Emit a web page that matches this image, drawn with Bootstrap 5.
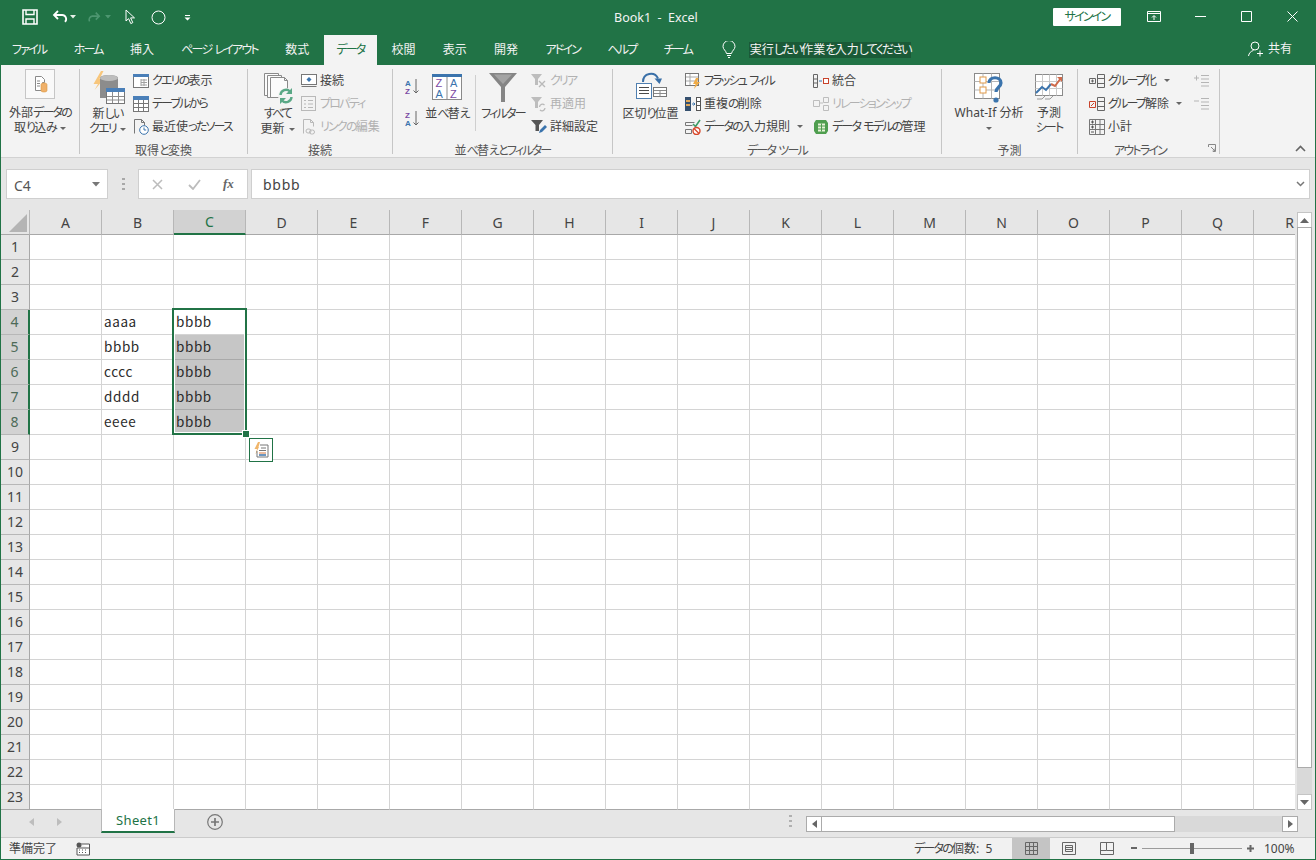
<!DOCTYPE html>
<html lang="ja">
<head>
<meta charset="UTF-8">
<title>Book1 - Excel</title>
<link rel="stylesheet" href="https://cdn.jsdelivr.net/npm/bootstrap@5.3.0/dist/css/bootstrap.min.css">
<style>
html, body { margin: 0; width: 1316px; height: 860px; overflow: hidden; background: #fff; }
body, button { font-family: "Noto Sans", "Noto Sans CJK JP", sans-serif; font-size: 12px; font-feature-settings: "palt"; color: #444; }
svg { display: block; flex: none; }
.xl-kana { letter-spacing: -1.8px; }
.xl-app { width: 1316px; height: 860px; border-left: 1px solid #217346; border-right: 1px solid #217346; border-bottom: 1px solid #217346; }

/* spacing helpers */
.xl-l2 { margin-left: 2px; }
.xl-l4 { margin-left: 4px; }
.xl-l5 { margin-left: 5px; }
.xl-l6 { margin-left: 6px; }
.xl-l7 { margin-left: 7px; }
.xl-l8 { margin-left: 8px; }
.xl-l9 { margin-left: 9px; }
.xl-l11 { margin-left: 11px; }
.xl-l13 { margin-left: 13px; }
.xl-l14 { margin-left: 14px; }
.xl-l15 { margin-left: 15px; }
.xl-l18 { margin-left: 18px; }
.xl-l25 { margin-left: 25px; }
.xl-t4 { margin-top: 4px; }
.xl-t5 { margin-top: 5px; }

/* title and tabs */
.xl-title { height: 33px; background: #217346; color: #fff; margin-left: -1px; margin-right: -1px; }
.xl-qat { padding-left: 22px; height: 33px; }
.xl-qat svg { margin-top: 1px; }
.xl-doc { position: absolute; left: 614px; top: 9px; font-size: 12.5px; color: #f3f3f3; white-space: pre; }
.xl-signin.btn { position: absolute; left: 1053px; top: 8px; width: 68px; height: 18px; padding: 0; border: 0; border-radius: 1px; background: #fff; color: #217346; font-size: 12px; line-height: 18px; }
.xl-winbtn { position: absolute; top: 0; }
.xl-win1 { left: 1147px; }
.xl-win2 { left: 1195px; }
.xl-win3 { left: 1241px; }
.xl-win4 { left: 1287px; }
.xl-tabs { height: 32px; background: #217346; margin-left: -1px; margin-right: -1px; padding-left: 12px; color: #f2f2f2; }
.xl-tab { margin-right: 27.3px; text-align: left; line-height: 16px; padding-top: 9px; white-space: nowrap; }
.xl-tab-on { width: 53px; background: #f3f3f3; color: #217346; margin: 2px 14px 0 -12px; padding: 7px 0 0 12px; }
.xl-bulb { margin: 8px 0 0 3px; }
.xl-search { margin: 9px 0 0 13px; height: 16px; width: 162px; background: #1a5a37; color: #f4f4f4; line-height: 16px; text-align: center; white-space: nowrap; }
.xl-share { position: absolute; left: 1248px; top: 7px; color: #f4f4f4; gap: 5px; }

/* ribbon */
.xl-ribbon { height: 93px; background: #f3f3f3; border-bottom: 1px solid #d2d2d2; padding-top: 4px; }
.xl-group { height: 85px; border-right: 1px solid #c6c6c6; position: relative; flex: none; }
.xl-gbody { height: 74px; }
.xl-glabel { height: 15px; line-height: 15px; text-align: center; color: #555; white-space: nowrap; }
.xl-glabel-out { padding-right: 17px; }
.xl-g1 { width: 79px; }
.xl-g2 { width: 168px; }
.xl-g3 { width: 145px; }
.xl-g4 { width: 220px; }
.xl-g5 { width: 329px; }
.xl-g6 { width: 136px; }
.xl-g7 { width: 142px; }
.xl-g2 .xl-gbody { padding-left: 7px; }
.xl-g3 .xl-gbody { padding-left: 12px; }
.xl-g4 .xl-gbody { padding-left: 12px; }
.xl-g5 .xl-gbody { padding-left: 10px; }
.xl-g6 .xl-gbody { padding-left: 10px; }
.xl-g7 .xl-gbody { padding-left: 11px; }
.xl-big { display: flex; flex-direction: column; align-items: center; line-height: 15px; text-align: center; white-space: nowrap; flex: none; }
.xl-icon36 { height: 36px; }
.xl-icon37 { height: 37px; }
.xl-small { flex: none; }
.xl-item { height: 23px; gap: 3px; white-space: nowrap; }
.xl-off { color: #b1b1b1; }
.xl-caret { display: inline-block; width: 0; height: 0; border: 3px solid transparent; border-top: 3px solid #666; border-bottom: 0; vertical-align: middle; margin-left: 4px; }
.xl-w15 { width: 15px; }
.xl-w30 { width: 30px; }
.xl-w35 { width: 35px; }
.xl-w41 { width: 41px; }
.xl-w44 { width: 44px; }
.xl-w55 { width: 55px; }
.xl-w74 { width: 74px; }
.xl-w105 { width: 105px; }
.xl-w128 { width: 128px; }
.xl-vsep { width: 1px; height: 56px; margin: 6px 0 0 6px; background: #cfcfcf; flex: none; }
.xl-sortcol { height: 73px; justify-content: space-around; padding: 2px 0 8px; }
.xl-launcher { position: absolute; right: 3px; bottom: 2px; }
.xl-collapse { position: absolute; left: 1294px; top: 80px; }

/* formula bar */
.xl-fbar { height: 52px; background: #e6e6e6; padding: 11px 5px; }
.xl-box { height: 30px; background: #fff; border: 1px solid #cfcfcf; }
.xl-namebox { width: 102px; color: #555; font-size: 14px; padding: 0 7px; }
.xl-namebox span { padding-top: 3px; }
.xl-grip { width: 30px; justify-content: center; }
.xl-fxbox { width: 110px; margin-right: 3px; }
.xl-fxmark { margin-left: 22px; font-family: "Liberation Serif", serif; font-style: italic; font-weight: 700; font-size: 13px; color: #666; }
.xl-formula { flex: 1; color: #444; font-size: 14px; letter-spacing: .75px; padding: 0 11px; }
.xl-fdown { margin-right: -7px; }

/* sheet */
.xl-grid { height: 600px; }
.xl-view { width: 1294px; height: 600px; overflow: hidden; flex: none; }
.xl-sheet { table-layout: fixed; border-collapse: separate; border-spacing: 0; width: 1325px; font-family: "Noto Sans CJK JP", sans-serif; font-feature-settings: normal; }
.xl-colhead { width: 29px; }
.xl-colcell { width: 72px; }
.xl-sheet th, .xl-sheet td { height: 25px; padding: 0 0 2px; border-right: 1px solid #d4d4d4; border-bottom: 1px solid #d4d4d4; overflow: hidden; white-space: nowrap; }
.xl-sheet td { padding-left: 2px; font-size: 13.5px; letter-spacing: .6px; color: #2b2b2b; font-weight: 400; line-height: 20px; }
.xl-sheet thead th { padding-bottom: 0; background: #e6e6e6; border-right-color: #b7b7b7; border-bottom-color: #a8a8a8; text-align: center; font-family: "Noto Sans", sans-serif; font-size: 14px; font-weight: 400; color: #444; position: relative; }
.xl-sheet tbody th { background: #e6e6e6; border-right-color: #a8a8a8; border-bottom-color: #b7b7b7; text-align: center; font-family: "Noto Sans", sans-serif; font-size: 14px; font-weight: 400; color: #444; }
.xl-sheet tr:last-child td, .xl-sheet tr:last-child th { border-bottom-color: #a8a8a8; }
.xl-sheet thead th.xl-hsel { background: #d2d2d2; color: #217346; border-bottom: 2px solid #217346; }
.xl-sheet tbody th.xl-hsel { background: #d2d2d2; color: #4d6a58; border-right: 2px solid #217346; }
.xl-sheet td.xl-shade { background: #c6c6c6; border-bottom-color: #a9a9a9; border-right-color: #c6c6c6; }
.xl-corner { position: absolute; left: 8px; top: 4px; }
.xl-sel { position: absolute; left: 171px; top: 98px; width: 75px; height: 127px; border: 2px solid #217346; box-shadow: inset 0 0 0 1px #fff; pointer-events: none; }
.xl-handle { position: absolute; right: -4px; bottom: -4px; width: 6px; height: 6px; background: #217346; outline: 1px solid #fff; }
.xl-tag { position: absolute; left: 248px; top: 228px; width: 24px; height: 24px; background: #fff; border: 1px solid #217346; }
.xl-vbar { width: 20px; background: #e6e6e6; padding: 2px 4px 0 2px; flex: none; height: 600px; }
.xl-sbtn { width: 15px; height: 16px; background: #fff; border: 1px solid #c4c4c4; flex: none; }
.xl-vthumb { width: 15px; height: 541px; background: #fff; border: 1px solid #ababab; margin-top: -1px; flex: none; }
.xl-vtrack { flex: 1; width: 15px; background: #d9d9d9; }

/* tab bar and status */
.xl-tabbar { height: 28px; background: #e6e6e6; border-bottom: 1px solid #cbcbcb; position: relative; }
.xl-nav { width: 100px; padding-left: 28px; gap: 23px; height: 24px; }
.xl-sheettab { width: 74px; height: 24px; background: #fff; border-left: 1px solid #b7b7b7; border-right: 1px solid #b7b7b7; border-bottom: 2px solid #217346; text-align: center; color: #217346; font-size: 13px; letter-spacing: .3px; line-height: 23px; margin-top: -1px; }
.xl-add { margin-left: 32px; margin-top: 4px; }
.xl-hgrip { position: absolute; left: 788px; top: 5px; }
.xl-hbar { position: absolute; left: 805px; top: 6px; width: 492px; height: 16px; }
.xl-hbtn { width: 16px; height: 16px; background: #fff; border: 1px solid #ababab; flex: none; }
.xl-hthumb { width: 353px; height: 16px; background: #fff; border: 1px solid #ababab; border-left: 0; flex: none; }
.xl-htrack { flex: 1; height: 16px; background: #d9d9d9; }
.xl-status { height: 21px; background: #f1f1f1; position: relative; padding-left: 8px; color: #444; }
.xl-ready { width: 67px; line-height: 19px; }
.xl-count { position: absolute; left: 913px; top: 1px; line-height: 19px; white-space: nowrap; }
.xl-views { position: absolute; left: 1011px; top: 0; height: 21px; }
.xl-vbtn { width: 38px; height: 21px; justify-content: center; }
.xl-vbtn-on { background: #c4c4c4; }
.xl-zoom { position: absolute; left: 1130px; top: 0; height: 21px; gap: 3px; }
.xl-slider { width: 100px; height: 1px; background: #9b9b9b; position: relative; margin: 0 2px; }
.xl-slider span { position: absolute; left: 48px; top: -5px; width: 4px; height: 11px; background: #666; }
.xl-pct { position: absolute; left: 1263px; top: 1px; line-height: 19px; }
</style>
</head>
<body>
<div class="xl-app d-flex flex-column">

  <!-- title bar -->
  <div class="xl-title position-relative">
    <div class="xl-qat d-flex align-items-center">
      <svg width="16" height="16" viewBox="0 0 16 16" fill="none" stroke="#fff" stroke-width="1.6"><path d="M1 1h14v14H1z"/><path d="M4 1v4.500h8V1M4 15v-5h8v5" stroke-width="1.4"/></svg>
      <svg class="xl-l14" width="16" height="16" viewBox="0 0 16 16" fill="none" stroke="#fff" stroke-width="1.8"><path d="M6 2 2 6l4 4"/><path d="M2.500 6H10a4 4 0 0 1 3 6.800"/></svg>
      <svg class="xl-l2" width="6" height="4" viewBox="0 0 6 4"><path d="M0 0h6L3 3.500z" fill="#e8f0ea"/></svg>
      <svg class="xl-l11" width="14" height="16" viewBox="0 0 16 16" fill="none" stroke="#4d9670" stroke-width="1.8"><path d="M10 3l4 4-4 4"/><path d="M13.500 7H6a4 4 0 0 0-3 6"/></svg>
      <svg class="xl-l4" width="6" height="4" viewBox="0 0 6 4"><path d="M0 0h6L3 3.500z" fill="#4d9670"/></svg>
      <svg class="xl-l14" width="11" height="16" viewBox="0 0 11 16" fill="none" stroke="#fff" stroke-width="1"><path d="M1 1v11l2.600-2.400 2.200 5 2-1-2.200-4.700H9.500z"/></svg>
      <svg class="xl-l15" width="15" height="15" viewBox="0 0 15 15" fill="none" stroke="#fff" stroke-width="1"><circle cx="7.500" cy="7.500" r="6.500"/></svg>
      <svg class="xl-l18" width="7" height="7" viewBox="0 0 7 7"><path d="M1 1h5v1H1zM.5 3.500h6L3.500 6.500z" fill="#fff"/></svg>
    </div>
    <div class="xl-doc">Book1  -  Excel</div>
    <button class="btn xl-signin" type="button">サインイン</button>
    <svg class="xl-winbtn xl-win1" width="14" height="33" viewBox="0 0 14 33" fill="none" stroke="#fff"><path d="M.5 11.500h13v10H.5zM.5 13.500h13"/><path d="M7 20v-4M5 17.500l2-2 2 2"/></svg>
    <svg class="xl-winbtn xl-win2" width="11" height="33" viewBox="0 0 11 33" stroke="#fff"><path d="M0 16.500h11"/></svg>
    <svg class="xl-winbtn xl-win3" width="11" height="33" viewBox="0 0 11 33" fill="none" stroke="#fff"><path d="M.5 11.500h10v10H.5z"/></svg>
    <svg class="xl-winbtn xl-win4" width="11" height="33" viewBox="0 0 11 33" fill="none" stroke="#fff"><path d="M.5 11.500l10 10M10.500 11.500l-10 10"/></svg>
  </div>

  <!-- ribbon tabs -->
  <div class="xl-tabs d-flex position-relative">
    <div class="xl-tab">ファイル</div>
    <div class="xl-tab">ホーム</div>
    <div class="xl-tab">挿入</div>
    <div class="xl-tab">ページ レイアウト</div>
    <div class="xl-tab">数式</div>
    <div class="xl-tab xl-tab-on">データ</div>
    <div class="xl-tab">校閲</div>
    <div class="xl-tab">表示</div>
    <div class="xl-tab">開発</div>
    <div class="xl-tab">アドイン</div>
    <div class="xl-tab">ヘルプ</div>
    <div class="xl-tab">チーム</div>
    <svg class="xl-bulb" width="14" height="18" viewBox="0 0 14 18" fill="none" stroke="#fff"><path d="M4.500 12.500C4 9.500 1 8.500 1 5.500a6 6 0 0 1 12 0c0 3-3 4-3.500 7zM5 14.500h4M6 16.500h2"/></svg>
    <div class="xl-search">実行したい作業を入力してください</div>
    <div class="xl-share d-flex align-items-center">
      <svg width="15" height="16" viewBox="0 0 15 16" fill="none" stroke="#fff"><circle cx="7" cy="5" r="4"/><path d="M.5 15c.5-3 2.500-5 5-5.500M9 12.500h6M12 9.500v6"/></svg>
      <span>共有</span>
    </div>
  </div>

  <!-- ribbon -->
  <div class="xl-ribbon d-flex position-relative">

    <div class="xl-group xl-g1">
      <div class="xl-gbody d-flex justify-content-center">
        <div class="xl-big">
          <div class="xl-icon36">
            <svg width="30" height="30" viewBox="0 0 30 30"><rect x=".5" y=".5" width="29" height="29" fill="#f9f9f9" stroke="#c6c6c6"/><path d="M10.500 7.500h6l3 3v3h-2v8h-7z" fill="#fff" stroke="#8a8a8a"/><path d="M12 12h3M12 14.500h3M12 17h3" stroke="#8a8a8a"/><path d="M16 15.500c0-2 6-2 6 0v6c0 2-6 2-6 0z" fill="#f0b16a" stroke="#d99845" stroke-width=".6"/></svg>
          </div>
          <div>外部データの</div>
          <div>取り込み<span class="xl-caret"></span></div>
        </div>
      </div>
    </div>

    <div class="xl-group xl-g2">
      <div class="xl-gbody d-flex">
        <div class="xl-big xl-w41">
          <div class="xl-icon37">
            <svg width="34" height="36" viewBox="0 0 34 36"><path d="M10 2 2.500 15H7L3.500 21 13 10H8.500l4-8z" fill="#f7c67c"/><path d="M9 9c0-4 18-4 18 0v20H9z" fill="#8c8c8c"/><ellipse cx="18" cy="9" rx="9" ry="3" fill="#bdbdbd"/><rect x="15.500" y="19.500" width="18" height="15" fill="#fff" stroke="#777"/><rect x="15" y="19" width="19" height="4" fill="#4a7fb8"/><path d="M16 27.500h17M16 31h17M21.500 23v11M27.500 23v11" stroke="#8d8d8d"/></svg>
          </div>
          <div>新しい</div>
          <div>クエリ<span class="xl-caret"></span></div>
        </div>
        <div class="xl-small xl-l5">
          <div class="xl-item d-flex align-items-center">
            <svg width="16" height="14" viewBox="0 0 16 14"><rect x=".5" y=".5" width="15" height="13" fill="#fff" stroke="#777"/><rect x="0" y="0" width="16" height="3" fill="#4a7fb8"/><path d="M8 6h6M8 8.500h6M8 11h6M8 5v7M11 5v7" stroke="#a0a0a0"/></svg>
            <span>クエリの表示</span>
          </div>
          <div class="xl-item d-flex align-items-center">
            <svg width="16" height="16" viewBox="0 0 16 16"><rect x=".5" y=".5" width="15" height="15" fill="#fff" stroke="#777"/><rect x="0" y="0" width="16" height="4" fill="#4a7fb8"/><path d="M1 7.500h14M1 11.500h14M5.500 4v11M10.500 4v11" stroke="#777"/></svg>
            <span>テーブルから</span>
          </div>
          <div class="xl-item d-flex align-items-center">
            <svg width="16" height="16" viewBox="0 0 16 16"><path d="M1.500 14.500V.5h7l3 3v3" fill="none" stroke="#777"/><path d="M8.500.5v3h3" fill="none" stroke="#777"/><circle cx="11" cy="11" r="4.300" fill="#fff" stroke="#3b74ad"/><path d="M11 8.500V11h2.200" fill="none" stroke="#3b74ad"/></svg>
            <span>最近使ったソース</span>
          </div>
        </div>
      </div>
      <div class="xl-glabel">取得と変換</div>
    </div>

    <div class="xl-group xl-g3">
      <div class="xl-gbody d-flex">
        <div class="xl-big xl-w35">
          <div class="xl-icon37">
            <svg width="32" height="35" viewBox="0 0 32 35"><g fill="#fbfbfb" stroke="#8a8a8a"><path d="M2.500 4.500h14v22h-14z"/><path d="M5.500 6.500h14v22h-14z"/><path d="M8.500 8.500h14l3 3v17h-17z"/></g><path d="M22.500 8.500v3h3" fill="none" stroke="#8a8a8a"/><circle cx="24" cy="27" r="8" fill="#f3f3f3"/><path d="M18.500 26a5.500 5.500 0 0 1 9.500-3.500M29.500 28a5.500 5.500 0 0 1-9.500 3.500" fill="none" stroke="#5aa886" stroke-width="2.400"/><path d="M30 19v6h-6zM18 35v-6h6z" fill="#5aa886"/></svg>
          </div>
          <div>すべて</div>
          <div>更新<span class="xl-caret"></span></div>
        </div>
        <div class="xl-small xl-l6">
          <div class="xl-item d-flex align-items-center">
            <svg width="16" height="14" viewBox="0 0 16 14"><rect x=".5" y=".5" width="15" height="10" fill="#fff" stroke="#777"/><path d="M.5 12.500h15" stroke="#777"/><path d="M8 3l2.500 2.500L8 8 5.500 5.500z" fill="#3b74ad"/></svg>
            <span>接続</span>
          </div>
          <div class="xl-item d-flex align-items-center xl-off">
            <svg width="16" height="16" viewBox="0 0 16 16" fill="none" stroke="#b9b9b9"><rect x=".5" y=".5" width="14" height="14"/><path d="M3 4.500h2M7 4.500h5M3 8h2M7 8h5M3 11.500h2M7 11.500h5"/></svg>
            <span>プロパティ</span>
          </div>
          <div class="xl-item d-flex align-items-center xl-off">
            <svg width="16" height="16" viewBox="0 0 16 16" fill="none" stroke="#b9b9b9"><path d="M2.500 14.500V.5h7l3 3v4M9.500.5v3h3"/><rect x="5" y="10" width="5" height="4" rx="2"/><rect x="8.500" y="11" width="5" height="4" rx="2"/></svg>
            <span>リンクの編集</span>
          </div>
        </div>
      </div>
      <div class="xl-glabel">接続</div>
    </div>

    <div class="xl-group xl-g4">
      <div class="xl-gbody d-flex">
        <div class="xl-sortcol xl-w15 d-flex flex-column">
          <svg width="15" height="17" viewBox="0 0 15 17"><text x="0" y="8" font-size="8" fill="#3b74ad" font-family="Liberation Sans" font-weight="700">A</text><text x="0" y="16" font-size="8" fill="#7a4aa3" font-family="Liberation Sans" font-weight="700">Z</text><path d="M11 1v14M8.500 12.500 11 15l2.500-2.500" fill="none" stroke="#666"/></svg>
          <svg width="15" height="17" viewBox="0 0 15 17"><text x="0" y="8" font-size="8" fill="#7a4aa3" font-family="Liberation Sans" font-weight="700">Z</text><text x="0" y="16" font-size="8" fill="#3b74ad" font-family="Liberation Sans" font-weight="700">A</text><path d="M11 1v14M8.500 12.500 11 15l2.500-2.500" fill="none" stroke="#666"/></svg>
        </div>
        <div class="xl-big xl-w44 xl-l5">
          <div class="xl-icon37">
            <svg class="xl-t5" width="30" height="26" viewBox="0 0 30 26"><rect x=".5" y=".5" width="29" height="25" fill="#fff" stroke="#8a8a8a"/><rect x="0" y="0" width="30" height="3" fill="#3b74ad"/><path d="M15 3v22" stroke="#8a8a8a"/><text x="3.500" y="13" font-size="11" fill="#7a4aa3" font-family="Liberation Sans">Z</text><text x="18" y="13" font-size="11" fill="#3b74ad" font-family="Liberation Sans">A</text><text x="3.500" y="24" font-size="11" fill="#3b74ad" font-family="Liberation Sans">A</text><text x="18" y="24" font-size="11" fill="#7a4aa3" font-family="Liberation Sans">Z</text></svg>
          </div>
          <div>並べ替え</div>
        </div>
        <div class="xl-vsep"></div>
        <div class="xl-big xl-w44 xl-l5">
          <div class="xl-icon37">
            <svg class="xl-t4" width="28" height="29" viewBox="0 0 28 29"><path d="M0 0h28L16 14v15h-4V14z" fill="#858585"/><path d="M5 1.500h18L14 11z" fill="#a3a3a3"/></svg>
          </div>
          <div>フィルター</div>
        </div>
        <div class="xl-small xl-l6">
          <div class="xl-item d-flex align-items-center xl-off">
            <svg width="16" height="16" viewBox="0 0 16 16"><path d="M0 1h11L7 6v6H4V6z" fill="#bdbdbd"/><path d="M8 8l6 6M14 8l-6 6" stroke="#b9b9b9" stroke-width="1.400"/></svg>
            <span>クリア</span>
          </div>
          <div class="xl-item d-flex align-items-center xl-off">
            <svg width="16" height="16" viewBox="0 0 16 16"><path d="M0 1h11L7 6v6H4V6z" fill="#bdbdbd"/><path d="M8.500 11a3 3 0 0 1 5-2M14 12a3 3 0 0 1-5 2" fill="none" stroke="#b9b9b9" stroke-width="1.300"/></svg>
            <span>再適用</span>
          </div>
          <div class="xl-item d-flex align-items-center">
            <svg width="16" height="16" viewBox="0 0 16 16"><path d="M0 1h12L8 6v6H4.500V6z" fill="#555"/><path d="M8 14l1-3 5-5 2 2-5 5z" fill="#3b74ad"/></svg>
            <span>詳細設定</span>
          </div>
        </div>
      </div>
      <div class="xl-glabel">並べ替えとフィルター</div>
    </div>

    <div class="xl-group xl-g5">
      <div class="xl-gbody d-flex">
        <div class="xl-big xl-w55">
          <div class="xl-icon37">
            <svg width="32" height="31" viewBox="0 0 32 31"><rect x="1.500" y="14.500" width="15" height="15" fill="#fff" stroke="#4f7fb0"/><path d="M4 18.500h10M4 21.500h10M4 24.500h10" stroke="#4a4a4a"/><rect x="18.500" y="18.500" width="13" height="9" fill="#fff" stroke="#777"/><path d="M19 21.500h12M19 24.500h12M25 21.500v6" stroke="#8a8a8a"/><path d="M8 13C8 4 19.500 2 23 9.500" fill="none" stroke="#3a70a8" stroke-width="2"/><path d="M19.500 9.500h7.500L24.500 15z" fill="#3a70a8"/></svg>
          </div>
          <div>区切り位置</div>
        </div>
        <div class="xl-small xl-l7 xl-w128">
          <div class="xl-item d-flex align-items-center">
            <svg width="16" height="16" viewBox="0 0 16 16"><rect x=".5" y=".5" width="13" height="12" fill="#fff" stroke="#777"/><path d="M1 4h12M1 8h12M5 1v11" stroke="#a9a9a9"/><path d="M11 5 8 11h2.500L9 16l6-7h-3l1.500-4z" fill="#f0ab45"/></svg>
            <span>フラッシュ フィル</span>
          </div>
          <div class="xl-item d-flex align-items-center">
            <svg width="16" height="16" viewBox="0 0 16 16"><rect x="0" y="1" width="6" height="14" fill="#35506e"/><rect x="11.500" y="1.500" width="4" height="13" fill="#fff" stroke="#555"/><path d="M1 5h4M1 9h4" stroke="#e0a85a" stroke-width="2"/><path d="M11 5.500h5M11 9.500h5" stroke="#555"/><path d="M7 8h3M8.500 6.500 10 8 8.500 9.500" fill="none" stroke="#3b74ad"/></svg>
            <span>重複の削除</span>
          </div>
          <div class="xl-item d-flex align-items-center">
            <svg width="16" height="16" viewBox="0 0 16 16"><path d="M.5 3.500h9M.5 3.500v3h7M.5 10.500h6v4h-6z" fill="none" stroke="#777"/><path d="M8 5l2.500 2.500L15 1" fill="none" stroke="#3f9c66" stroke-width="1.600"/><circle cx="11.500" cy="12" r="3.500" fill="#fff" stroke="#d8482b" stroke-width="1.400"/><path d="M9 9.500l5 5" stroke="#d8482b" stroke-width="1.300"/></svg>
            <span>データの入力規則</span><span class="xl-caret xl-l8"></span>
          </div>
        </div>
        <div class="xl-small">
          <div class="xl-item d-flex align-items-center">
            <svg width="16" height="14" viewBox="0 0 16 14"><path d="M.5.500h4v13h-4zM.5 5h4M.5 9h4" fill="none" stroke="#666"/><path d="M6 7h3" stroke="#3b74ad"/><rect x="10.500" y="4.500" width="5" height="5" fill="#fff" stroke="#c9432b"/></svg>
            <span>統合</span>
          </div>
          <div class="xl-item d-flex align-items-center xl-off">
            <svg width="16" height="14" viewBox="0 0 16 14" fill="none" stroke="#bdbdbd"><path d="M.5 3.500h6v6h-6zM10.500.5h5v5h-5zM10.500 8.500h5v5h-5zM7 6h3"/></svg>
            <span>リレーションシップ</span>
          </div>
          <div class="xl-item d-flex align-items-center">
            <svg width="16" height="16" viewBox="0 0 16 16"><path d="M3 1h10l2 3v8l-2 3H3l-2-3V4z" fill="#4f9e4f"/><path d="M5 4.500h7v8H5z" fill="#e8f3d8"/><path d="M5 7h7M5 10h7M8.500 4.500v8" stroke="#4f9e4f"/></svg>
            <span>データ モデルの管理</span>
          </div>
        </div>
      </div>
      <div class="xl-glabel">データ ツール</div>
    </div>

    <div class="xl-group xl-g6">
      <div class="xl-gbody d-flex">
        <div class="xl-big xl-w74">
          <div class="xl-icon36">
            <svg class="xl-t4" width="30" height="32" viewBox="0 0 30 32"><rect x=".5" y=".5" width="25" height="25" fill="#fff" stroke="#8a8a8a"/><path d="M.5 8.500h25M.5 17h25M9 .5v25M17.500.5v25" stroke="#b5b5b5"/><rect x="6" y="4" width="6" height="6" fill="#fff" stroke="#e09a4a"/><rect x="6" y="14" width="6" height="6" fill="#fff" stroke="#e09a4a"/><path d="M15 10c0-7 12-7 12 0 0 4-5 4-5 9" fill="none" stroke="#3b74ad" stroke-width="3.200"/><circle cx="22" cy="27" r="2.600" fill="#3b74ad"/></svg>
          </div>
          <div>What-If 分析</div>
          <div><span class="xl-caret m-0"></span></div>
        </div>
        <div class="xl-big xl-w30 xl-l8">
          <div class="xl-icon36">
            <svg class="xl-t5" width="28" height="26" viewBox="0 0 28 26"><rect x=".5" y=".5" width="27" height="21" fill="#fff" stroke="#8a8a8a"/><path d="M.5 7.500h27M.5 14.500h27M7.500.5v21M14.500.5v21M21.500.5v21" stroke="#c9c9c9"/><path d="M1 19l6-6 4 3 5-6" fill="none" stroke="#3b74ad" stroke-width="2"/><path d="M16 10l4 2 6-8" fill="none" stroke="#cf6a4b" stroke-width="2"/><path d="M22 3h5v5z" fill="#cf6a4b"/><path d="M2 25h5l3-3M10 25h5l3-3" fill="none" stroke="#9a9a9a"/></svg>
          </div>
          <div>予測</div>
          <div>シート</div>
        </div>
      </div>
      <div class="xl-glabel">予測</div>
    </div>

    <div class="xl-group xl-g7">
      <div class="xl-gbody d-flex">
        <div class="xl-small xl-w105">
          <div class="xl-item d-flex align-items-center">
            <svg width="16" height="14" viewBox="0 0 16 14" fill="none" stroke="#666"><path d="M.5 4.500h6v5h-6zM8.500.5h7v13h-7zM8.500 4.500h7M8.500 9.500h7M2 7h3M3.500 5.500v3"/></svg>
            <span>グループ化</span><span class="xl-caret xl-l9"></span>
          </div>
          <div class="xl-item d-flex align-items-center">
            <svg width="16" height="14" viewBox="0 0 16 14" fill="none"><path d="M.5 4.500h6v6h-6z" stroke="#c9432b"/><path d="M2 9l3-3" stroke="#c9432b"/><path d="M8.500.5h7v13h-7zM8.500 4.500h7M8.500 9.500h7" stroke="#666"/></svg>
            <span>グループ解除</span><span class="xl-caret xl-l8"></span>
          </div>
          <div class="xl-item d-flex align-items-center">
            <svg width="16" height="16" viewBox="0 0 16 16" fill="none" stroke="#777"><path d="M.5.500h15v15H.5zM.5 5.500h15M.5 10.500h15M6.500.5v15M11 .5v15"/><path d="M2 3h3M3.500 1.500v3M2 8h3M3.500 6.500v3M2 13h3" stroke="#555"/></svg>
            <span>小計</span>
          </div>
        </div>
        <div class="xl-small">
          <div class="xl-item d-flex align-items-center">
            <svg width="15" height="14" viewBox="0 0 15 14" fill="none" stroke="#b5b5b5"><path d="M0 4h5M2.500 1.500v5M7 1.500h8M7 5h8M7 8.500h8M7 12h8"/></svg>
          </div>
          <div class="xl-item d-flex align-items-center">
            <svg width="15" height="14" viewBox="0 0 15 14" fill="none" stroke="#b5b5b5"><path d="M0 4h5M7 1.500h8M7 5h8M7 8.500h8M7 12h8"/></svg>
          </div>
        </div>
      </div>
      <div class="xl-glabel xl-glabel-out">アウトライン</div>
      <svg class="xl-launcher" width="8" height="8" viewBox="0 0 8 8" fill="none" stroke="#888"><path d="M.5 3V.5H7.500V7.500H5M3 3l4 4M4.500 7H7V4.500"/></svg>
    </div>

    <svg class="xl-collapse" width="11" height="7" viewBox="0 0 11 7" fill="none" stroke="#666" stroke-width="1.600"><path d="M1 6l4.500-4.500L10 6"/></svg>
  </div>

  <!-- formula bar -->
  <div class="xl-fbar d-flex">
    <div class="xl-box xl-namebox d-flex align-items-center justify-content-between">
      <span>C4</span>
      <svg width="8" height="5" viewBox="0 0 8 5"><path d="M0 0h8L4 4.500z" fill="#777"/></svg>
    </div>
    <div class="xl-grip d-flex align-items-center">
      <svg width="3" height="12" viewBox="0 0 3 12" fill="#a8a8a8"><path d="M0 0h3v2H0zM0 5h3v2H0zM0 10h3v2H0z"/></svg>
    </div>
    <div class="xl-box xl-fxbox d-flex align-items-center">
      <svg class="xl-l13" width="11" height="11" viewBox="0 0 11 11" stroke="#bcbcbc" stroke-width="1.500"><path d="M1 1l9 9M10 1l-9 9"/></svg>
      <svg class="xl-l25" width="13" height="11" viewBox="0 0 13 11" fill="none" stroke="#bcbcbc" stroke-width="1.800"><path d="M1 6l4 4 7-9"/></svg>
      <span class="xl-fxmark">fx</span>
    </div>
    <div class="xl-box xl-formula d-flex align-items-center justify-content-between">
      <span>bbbb</span>
      <svg class="xl-fdown" width="9" height="6" viewBox="0 0 9 6" fill="none" stroke="#777" stroke-width="1.500"><path d="M1 1l3.500 3.500L8 1"/></svg>
    </div>
  </div>

  <!-- sheet -->
  <div class="xl-grid d-flex">
    <div class="xl-view position-relative">
      <table class="xl-sheet" id="sheet"></table>
      <div class="xl-sel"><div class="xl-handle"></div></div>
      <div class="xl-tag d-flex align-items-center justify-content-center">
        <svg width="16" height="16" viewBox="0 0 16 16"><path d="M5 0 1.500 7h2.500L2.500 12 8 5H5.500L7 0z" fill="#f0b56a"/><path d="M7 3h8v12H4V9" fill="#fff" stroke="#777"/><path d="M8 6h5M6 8.500h7" stroke="#777"/><path d="M6 11h7" stroke="#d9783f"/><path d="M6 13h7" stroke="#3b74ad" stroke-width="1.500"/></svg>
      </div>
    </div>
    <div class="xl-vbar d-flex flex-column">
      <div class="xl-sbtn d-flex align-items-center justify-content-center"><svg width="9" height="5" viewBox="0 0 9 5"><path d="M0 5h9L4.500 0z" fill="#666"/></svg></div>
      <div class="xl-vthumb"></div>
      <div class="xl-vtrack"></div>
      <div class="xl-sbtn d-flex align-items-center justify-content-center"><svg width="9" height="5" viewBox="0 0 9 5"><path d="M0 0h9L4.500 5z" fill="#666"/></svg></div>
    </div>
  </div>

  <!-- sheet tabs -->
  <div class="xl-tabbar d-flex">
    <div class="xl-nav d-flex align-items-center">
      <svg width="5" height="8" viewBox="0 0 5 8"><path d="M5 0v8L0 4z" fill="#bdbdbd"/></svg>
      <svg width="5" height="8" viewBox="0 0 5 8"><path d="M0 0v8l5-4z" fill="#bdbdbd"/></svg>
    </div>
    <div class="xl-sheettab">Sheet1</div>
    <svg class="xl-add" width="16" height="16" viewBox="0 0 16 16" fill="none" stroke="#777" stroke-width="1.200"><circle cx="8" cy="8" r="7.300"/><path d="M4 8h8M8 4v8" stroke-width="1.700"/></svg>
    <svg class="xl-hgrip" width="3" height="12" viewBox="0 0 3 12" fill="#b0b0b0"><path d="M0 0h3v2H0zM0 5h3v2H0zM0 10h3v2H0z"/></svg>
    <div class="xl-hbar d-flex">
      <div class="xl-hbtn d-flex align-items-center justify-content-center"><svg width="5" height="8" viewBox="0 0 5 8"><path d="M5 0v8L0 4z" fill="#666"/></svg></div>
      <div class="xl-hthumb"></div>
      <div class="xl-htrack"></div>
      <div class="xl-hbtn d-flex align-items-center justify-content-center"><svg width="5" height="8" viewBox="0 0 5 8"><path d="M0 0v8l5-4z" fill="#666"/></svg></div>
    </div>
  </div>

  <!-- status bar -->
  <div class="xl-status d-flex align-items-center">
    <div class="xl-ready">準備完了</div>
    <svg width="14" height="14" viewBox="0 0 14 14"><circle cx="3" cy="3" r="2.500" fill="#555"/><path d="M4.500 2h9v11H1V6h12" fill="#fff" stroke="#555"/><path d="M3 8h1M6 8h1M9 8h1M3 10.500h1M6 10.500h1M9 10.500h1" stroke="#555"/></svg>
    <div class="xl-count">データの個数:&nbsp;&nbsp;5</div>
    <div class="xl-views d-flex">
      <div class="xl-vbtn xl-vbtn-on d-flex align-items-center"><svg width="13" height="13" viewBox="0 0 13 13" fill="none" stroke="#666"><path d="M.5.500h12v12H.5zM.5 4.500h12M.5 8.500h12M4.500.5v12M8.500.5v12"/></svg></div>
      <div class="xl-vbtn d-flex align-items-center"><svg width="14" height="13" viewBox="0 0 14 13" fill="none" stroke="#666"><path d="M.5.500h13v12H.5zM3.500 3.500h7v6h-7zM4 5.500h6M4 7.500h6"/></svg></div>
      <div class="xl-vbtn d-flex align-items-center"><svg width="14" height="13" viewBox="0 0 14 13" fill="none" stroke="#666"><path d="M.5.500h13v12H.5zM.5 8.500h6V.5M6.500 8.500h7"/></svg></div>
    </div>
    <div class="xl-zoom d-flex align-items-center">
      <svg width="6" height="3" viewBox="0 0 6 3"><path d="M0 0h6v2H0z" fill="#666"/></svg>
      <div class="xl-slider"><span></span></div>
      <svg width="7" height="7" viewBox="0 0 7 7"><path d="M0 2.500h7v2H0zM2.500 0h2v7h-2z" fill="#666"/></svg>
    </div>
    <div class="xl-pct">100%</div>
  </div>
</div>

<script>
// build the worksheet grid
const cols = "ABCDEFGHIJKLMNOPQR".split("");
const data = {
  "4": { B: "aaaa", C: "bbbb" },
  "5": { B: "bbbb", C: "bbbb" },
  "6": { B: "cccc", C: "bbbb" },
  "7": { B: "dddd", C: "bbbb" },
  "8": { B: "eeee", C: "bbbb" }
};

let html = '<colgroup><col class="xl-colhead">' + cols.map(() => '<col class="xl-colcell">').join("") + "</colgroup>";
html += '<thead><tr><th><svg class="xl-corner" width="18" height="18" viewBox="0 0 18 18"><path d="M18 0v18H0z" fill="#b4b4b4"/></svg></th>';
cols.forEach(c => {
  html += `<th class="${c === "C" ? "xl-hsel" : ""}">${c}</th>`;
});
html += "</tr></thead><tbody>";
for (let r = 1; r <= 23; r++) {
  const sel = r >= 4 && r <= 8;
  html += `<tr><th class="${sel ? "xl-hsel" : ""}">${r}</th>`;
  cols.forEach(c => {
    const shade = c === "C" && r >= 5 && r <= 8;
    const v = (data[r] && data[r][c]) || "";
    html += `<td class="${shade ? "xl-shade" : ""}">${v}</td>`;
  });
  html += "</tr>";
}
html += "</tbody>";
document.getElementById("sheet").innerHTML = html;

// the ribbon font in the picture has narrow kana, so tighten just those runs
const walker = document.createTreeWalker(document.querySelector(".xl-app"), NodeFilter.SHOW_TEXT);
const nodes = [];
while (walker.nextNode()) {
  if (/[\u3040-\u30ff]/.test(walker.currentNode.nodeValue)) nodes.push(walker.currentNode);
}
nodes.forEach(n => {
  const box = document.createElement("span");
  box.innerHTML = n.nodeValue.replace(/[\u3040-\u30ff]+/g, m => `<span class="xl-kana">${m}</span>`);
  n.replaceWith(...box.childNodes);
});
</script>
</body>
</html>
